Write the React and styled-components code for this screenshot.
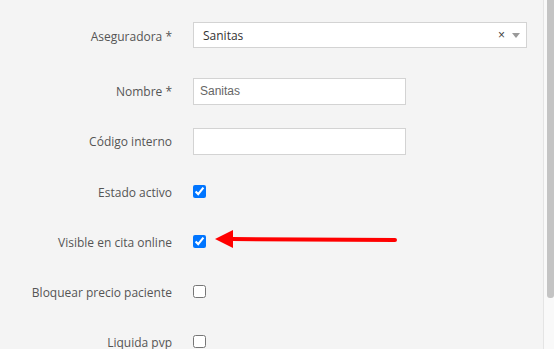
import React from 'react';
import styled, { createGlobalStyle } from 'styled-components';

const GlobalStyle = createGlobalStyle`
  html, body {
    margin: 0;
    padding: 0;
    background: #f4f4f4;
  }
`;

const Page = styled.div`
  position: relative;
  display: flex;
  height: 349px;
  overflow: hidden;
  background: #f4f4f4;
  font-family: 'Open Sans', 'Liberation Sans', sans-serif;
`;

const Main = styled.main`
  flex: 1;
  border-right: 1px solid #e4e4e4;
`;

const ScrollTrack = styled.div`
  width: 10px;
  padding-left: 3px;
  box-sizing: border-box;
  background: #f9f9f9;
`;

const ScrollThumb = styled.div`
  height: 298px;
  background: #c4c4c4;
  border-radius: 0 0 3px 3px;
`;

const Form = styled.form`
  padding: 10px 0 70px 0;
`;

const Row = styled.div`
  display: grid;
  grid-template-columns: 172px 1fr;
  column-gap: 21px;
  align-items: center;
  height: 50px;
  margin-bottom: ${(p) => p.$gap || 0}px;
`;

const Label = styled.label`
  text-align: right;
  padding-top: ${(p) => p.$pt || 0}px;
  font-size: 12px;
  color: #555;
  white-space: nowrap;
`;

const Select = styled.div`
  display: flex;
  align-items: center;
  width: 334px;
  height: 26px;
  box-sizing: border-box;
  border: 1px solid #d3d3d3;
  background: #fff;
  padding: 0 6px 0 9px;
  font-size: 12px;
  color: #333;
`;

const SelectValue = styled.span`
  flex: 1;
`;

const Clear = styled.span`
  font-family: 'Liberation Sans', sans-serif;
  font-size: 12px;
  color: #444;
  margin-right: 7px;
  line-height: 1;
`;

const Caret = styled.span`
  width: 0;
  height: 0;
  border-left: 4px solid transparent;
  border-right: 4px solid transparent;
  border-top: 5px solid #9a9a9a;
`;

const Input = styled.input`
  margin: 0;
  width: 213px;
  height: 27px;
  box-sizing: border-box;
  border: 1px solid #d3d3d3;
  background: #fff;
  padding: 0 6px;
  font-family: 'Liberation Sans', Arial, sans-serif;
  font-size: 12px;
  color: #666;
  outline: none;
`;

const Check = styled.input`
  margin: 0;
  width: 13px;
  height: 13px;
  justify-self: start;
`;

const Arrow = styled.svg`
  position: absolute;
  left: 214px;
  top: 229px;
`;

export default function App() {
  return (
    <>
      <GlobalStyle />
      <Page>
        <Main>
          <Form>
            <Row $gap={6}>
              <Label $pt={2}>Aseguradora *</Label>
              <Select>
                <SelectValue>Sanitas</SelectValue>
                <Clear>×</Clear>
                <Caret />
              </Select>
            </Row>
            <Row>
              <Label $pt={1}>Nombre *</Label>
              <Input defaultValue="Sanitas" />
            </Row>
            <Row>
              <Label $pt={1}>Código interno</Label>
              <Input defaultValue="" />
            </Row>
            <Row>
              <Label $pt={2}>Estado activo</Label>
              <Check type="checkbox" defaultChecked />
            </Row>
            <Row>
              <Label $pt={3}>Visible en cita online</Label>
              <Check type="checkbox" defaultChecked />
            </Row>
            <Row>
              <Label $pt={3}>Bloquear precio paciente</Label>
              <Check type="checkbox" />
            </Row>
            <Row>
              <Label $pt={3}>Liquida pvp</Label>
              <Check type="checkbox" />
            </Row>
          </Form>
        </Main>
        <ScrollTrack>
          <ScrollThumb />
        </ScrollTrack>
        <Arrow width="184" height="20" viewBox="0 0 184 20">
          <polygon points="1,10 19,1 19,19" fill="#f00" />
          <line x1="18" y1="10" x2="181" y2="11" stroke="#f00" strokeWidth="4" strokeLinecap="round" />
        </Arrow>
      </Page>
    </>
  );
}
